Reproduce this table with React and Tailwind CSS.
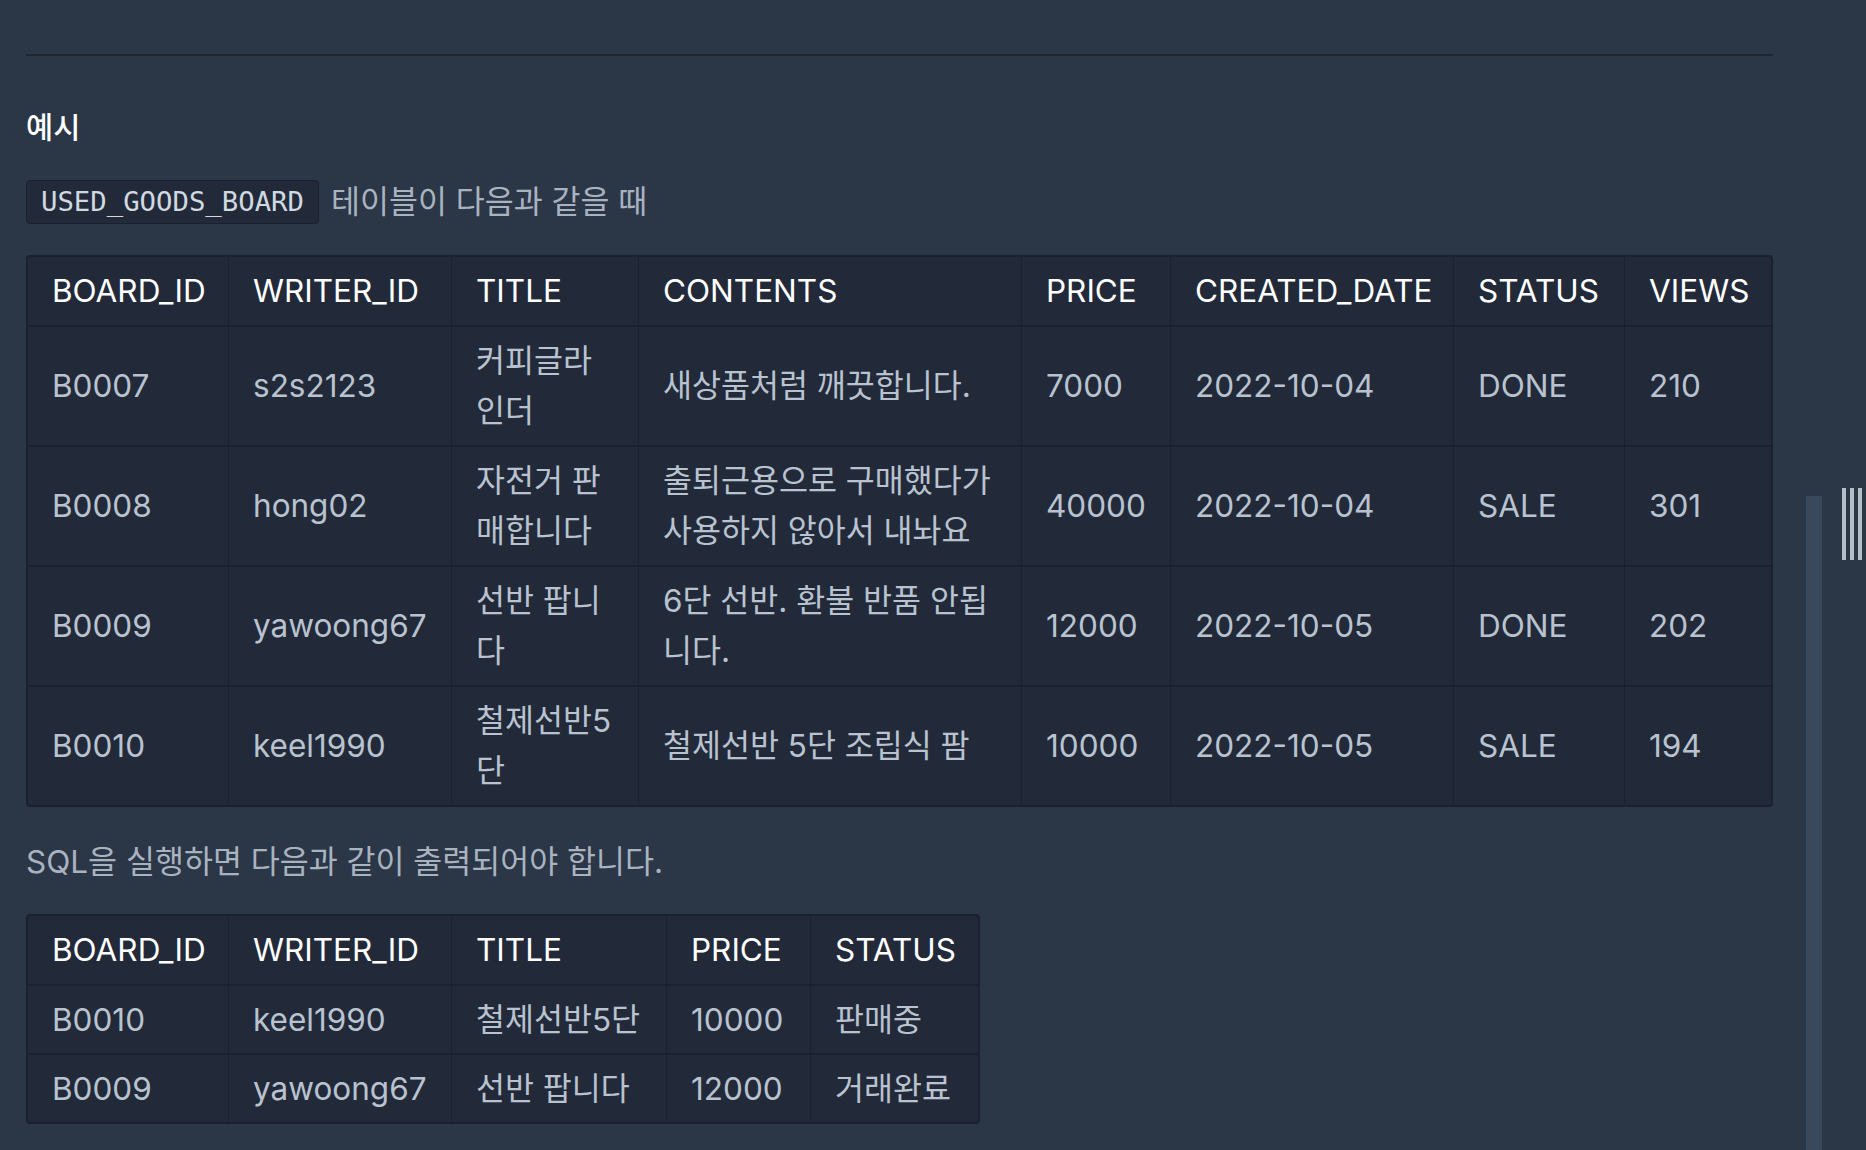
import React from 'react';

const boardCols = [
  { name: 'BOARD_ID', w: 'w-[201px]' },
  { name: 'WRITER_ID', w: 'w-[223px]' },
  { name: 'TITLE', w: 'w-[187px]' },
  { name: 'CONTENTS', w: 'w-[383px]' },
  { name: 'PRICE', w: 'w-[149px]' },
  { name: 'CREATED_DATE', w: 'w-[283px]' },
  { name: 'STATUS', w: 'w-[171px]' },
  { name: 'VIEWS', w: 'w-[146px]' },
];

const boardRows = [
  ['B0007', 's2s2123', '커피글라인더', '새상품처럼 깨끗합니다.', '7000', '2022-10-04', 'DONE', '210'],
  ['B0008', 'hong02', '자전거 판매합니다', '출퇴근용으로 구매했다가 사용하지 않아서 내놔요', '40000', '2022-10-04', 'SALE', '301'],
  ['B0009', 'yawoong67', '선반 팝니다', '6단 선반. 환불 반품 안됩니다.', '12000', '2022-10-05', 'DONE', '202'],
  ['B0010', 'keel1990', '철제선반5단', '철제선반 5단 조립식 팜', '10000', '2022-10-05', 'SALE', '194'],
];

const resultCols = [
  { name: 'BOARD_ID', w: 'w-[201px]' },
  { name: 'WRITER_ID', w: 'w-[223px]' },
  { name: 'TITLE', w: 'w-[215px]' },
  { name: 'PRICE', w: 'w-[144px]' },
  { name: 'STATUS', w: 'w-[167px]' },
];

const resultRows = [
  ['B0010', 'keel1990', '철제선반5단', '10000', '판매중'],
  ['B0009', 'yawoong67', '선반 팝니다', '12000', '거래완료'],
];

const DataTable = ({ cols, rows, tableWidth, bodyPad = 'py-[9px]', className }) => (
  <div className={`w-fit overflow-hidden rounded-[4px] border-2 border-[#1a2130] bg-[#222a3a] ${className}`}>
    <table className={`table-fixed border-separate border-spacing-0 text-left ${tableWidth}`}>
      <thead>
        <tr>
          {cols.map((c, i) => (
            <th
              key={c.name}
              className={`${c.w} border-b-2 border-[#1a2130] py-[9px] pl-[24px] pr-[20px] font-normal text-white ${i < cols.length - 1 ? 'border-r' : ''}`}
            >
              {c.name}
            </th>
          ))}
        </tr>
      </thead>
      <tbody>
        {rows.map((row, r) => (
          <tr key={row[0]}>
            {row.map((cell, i) => (
              <td
                key={i}
                className={`border-[#1a2130] ${bodyPad} pl-[24px] pr-[20px] align-middle text-[#b9c3cf] ${i < row.length - 1 ? 'border-r' : ''} ${r < rows.length - 1 ? 'border-b-2' : ''}`}
              >
                {cell}
              </td>
            ))}
          </tr>
        ))}
      </tbody>
    </table>
  </div>
);

export default function App() {
  return (
    <div className="flex h-screen overflow-hidden bg-[#2b3647] font-['Inter','Noto_Sans_CJK_KR',sans-serif] text-[31.5px] leading-[50px]">
      <main className="w-[1806px] shrink-0 pl-[26px] pr-[33px] pt-[54px]">
        <div className="h-[2px] bg-[#1e2533]" />

        <h3 className="mt-[45.5px] text-[29.5px] font-medium text-white">예시</h3>

        <p className="mt-[25.5px] flex h-[50px] items-center gap-[12px] text-[#a9b3c0]">
          <code className="flex h-[44px] items-center rounded-[4px] border border-[#1a2130] bg-[#222a3a] px-[14px] font-['DejaVu_Sans_Mono',monospace] text-[27.3px] text-[#d1d9e0]">
            USED_GOODS_BOARD
          </code>
          <span>테이블이 다음과 같을 때</span>
        </p>

        <DataTable cols={boardCols} rows={boardRows} tableWidth="w-[1743px]" className="mt-[28px]" />

        <p className="mt-[29.5px] text-[#a9b3c0]">SQL을 실행하면 다음과 같이 출력되어야 합니다.</p>

        <DataTable
          cols={resultCols}
          rows={resultRows}
          tableWidth="w-[950px] whitespace-nowrap"
          bodyPad="py-[8.5px]"
          className="mt-[27.5px]"
        />
      </main>

      {/* scrollbar thumb + split handle */}
      <div className="mt-[496px] w-[16px] shrink-0 bg-[#3a485b]" />
      <div className="ml-[20px] mt-[488px] flex h-[72px] gap-[4px] self-start">
        <span className="w-[4px] bg-[#b6c0c8]" />
        <span className="w-[4px] bg-[#b6c0c8]" />
        <span className="w-[4px] bg-[#b6c0c8]" />
      </div>
    </div>
  );
}
